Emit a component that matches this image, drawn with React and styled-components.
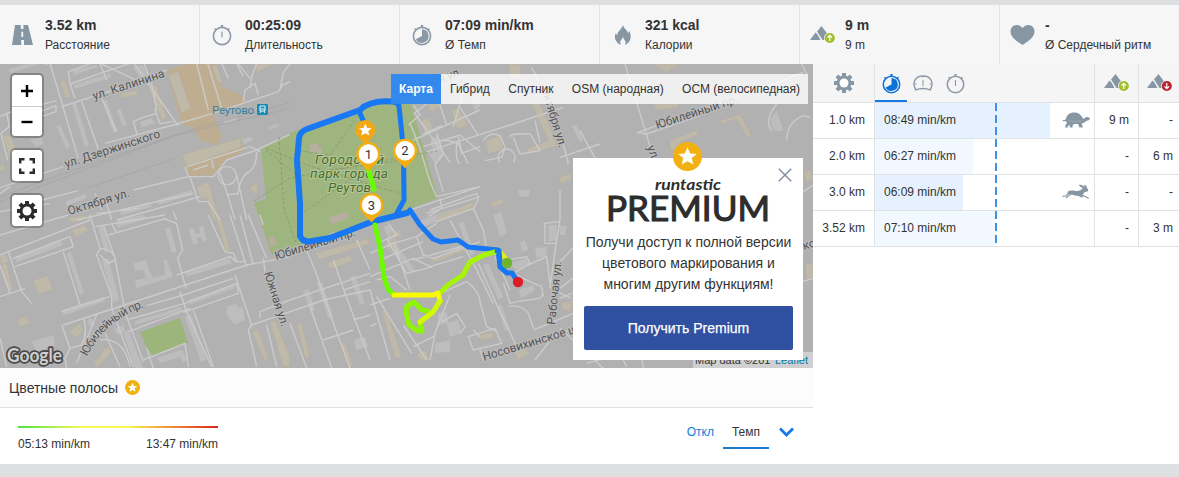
import React, { useState } from "react";
import styled, { createGlobalStyle } from "styled-components";

const GlobalStyle = createGlobalStyle`
  * {
    box-sizing: border-box;
  }
  body {
    margin: 0;
    background: #dedfe1;
    color: #333;
    font-family: "Liberation Sans", Arial, sans-serif;
    font-size: 12px;
    overflow: hidden;
  }
  svg {
    display: block;
  }
`;

const Page = styled.div`
  width: 1179px;
  height: 477px;
  padding: 5px 0 13px;
`;

const StatsBar = styled.div`
  display: grid;
  grid-template-columns: repeat(5, 200px) 179px;
  height: 59px;
  background: #f6f6f6;
`;

const StatCell = styled.div`
  display: flex;
  align-items: center;
  border-right: ${(p) => (p.$last ? "none" : "1px solid #e2e2e4")};
`;

const StatIcon = styled.div`
  width: 45px;
  padding-left: ${(p) => p.$indent || 10}px;
`;

const StatValue = styled.div`
  font-size: 14px;
  font-weight: bold;
  line-height: 20px;
`;

const StatLabel = styled.div`
  padding-top: 1px;
  margin-bottom: -1px;
  line-height: 19px;
`;

const Content = styled.div`
  display: grid;
  grid-template-columns: 813px 366px;
  height: 400px;
  background: #fff;
`;

const MapPanel = styled.div`
  position: relative;
  height: 304px;
  overflow: hidden;
  background: #b1b1b1;
`;

const MapControls = styled.div`
  position: absolute;
  top: 9px;
  left: 10px;
  display: flex;
  flex-direction: column;
  gap: 10px;
`;

const ControlGroup = styled.div`
  width: 34px;
  background: #fff;
  background-clip: padding-box;
  border: 2px solid rgba(0, 0, 0, 0.25);
  border-radius: 5px;
`;

const ControlButton = styled.button`
  display: flex;
  align-items: center;
  justify-content: center;
  width: 30px;
  height: 31px;
  padding: 0;
  border: 0;
  background: none;
  cursor: pointer;
  & + & {
    height: 30px;
    border-top: 1px solid #ccc;
  }
`;

const LayerMenu = styled.div`
  position: absolute;
  top: 10px;
  left: 391px;
  display: flex;
  height: 30px;
  width: 417px;
  background: rgba(255, 255, 255, 0.8);
`;

const LayerItem = styled.button`
  border: 0;
  padding: 0 ${(p) => (p.$active ? 8 : 9.2)}px;
  font: inherit;
  white-space: nowrap;
  cursor: pointer;
  font-weight: ${(p) => (p.$active ? "bold" : "normal")};
  color: ${(p) => (p.$active ? "#fff" : "#333")};
  background: ${(p) => (p.$active ? "rgba(23, 122, 236, 0.87)" : "none")};
`;

const Attribution = styled.div`
  position: absolute;
  right: 0;
  bottom: 0;
  display: flex;
  width: 120px;
  height: 16px;
  padding: 0 5px 0 2px;
  justify-content: space-between;
  font-size: 11px;
  line-height: 16px;
  white-space: nowrap;
  background: rgba(255, 255, 255, 0.4);
  a {
    color: #0078a8;
    text-decoration: none;
  }
`;

const PromoCard = styled.div`
  position: absolute;
  left: 573px;
  top: 94px;
  display: flex;
  flex-direction: column;
  align-items: center;
  width: 230px;
  height: 202px;
  padding: 18px 10px 10px 11px;
  background: #fff;
`;

const PromoBadge = styled.div`
  position: absolute;
  left: 100px;
  top: -16px;
`;

const PromoClose = styled.button`
  position: absolute;
  right: 11px;
  top: 10px;
  padding: 0;
  border: 0;
  background: none;
  cursor: pointer;
`;

const PromoText = styled.p`
  margin: 7px 0 11px;
  width: 216px;
  font-size: 14px;
  line-height: 21px;
  text-align: center;
`;

const PromoButton = styled.button`
  width: 209px;
  height: 44px;
  border: 0;
  border-radius: 2px;
  background: #3050a2;
  color: #fff;
  font: 14px "Liberation Sans", Arial, sans-serif;
  -webkit-text-stroke: 0.25px #fff;
  cursor: pointer;
`;

const LegendHeader = styled.div`
  display: flex;
  align-items: center;
  gap: 7px;
  height: 40px;
  padding-left: 9px;
  border-bottom: 1px solid #e0e0e0;
  background: #fcfcfc;
  font-size: 14px;
`;

const LegendBody = styled.div`
  display: flex;
  justify-content: space-between;
  height: 56px;
  padding: 18px 18px 0;
`;

const Scale = styled.div`
  width: 200px;
`;

const ScaleBar = styled.div`
  height: 2px;
  margin-bottom: 9px;
  background: linear-gradient(90deg, #4be33e, #f8f85a 32%, #fbf652 55%, #ec8a36 78%, #d8241c);
`;

const ScaleLabels = styled.div`
  display: flex;
  justify-content: space-between;
  line-height: 14px;
`;

const ModeTabs = styled.div`
  display: flex;
  align-items: flex-start;
  margin-top: -7px;
`;

const ModeTab = styled.button`
  height: 30px;
  padding: 0 9px 2px;
  border: 0;
  border-bottom: 2px solid ${(p) => (p.$active ? "#1a7bd0" : "transparent")};
  background: none;
  color: ${(p) => (p.$active ? "#333" : "#0b7ce0")};
  font: inherit;
  cursor: pointer;
`;

const ModeArrow = styled.div`
  padding: 7px 1px 0 10px;
`;

const SplitRow = styled.div`
  display: grid;
  grid-template-columns: 62px 220px 44px 40px;
  height: ${(p) => (p.$head ? 39 : 36)}px;
  background: ${(p) => (p.$head ? "#f5f5f6" : "#fff")};
  border-bottom: 1px solid #e1e2e4;
`;

const SplitCell = styled.div`
  display: flex;
  align-items: center;
  justify-content: ${(p) => (p.$center ? "center" : "flex-end")};
  padding-right: ${(p) => (p.$center ? 0 : 9)}px;
  border-right: ${(p) => (p.$last ? "none" : "1px solid #e1e2e4")};
`;

const SplitDistance = styled(SplitCell)`
  padding-right: ${(p) => (p.$last ? 6 : 9)}px;
  padding-bottom: 1px;
`;

const MetricTabs = styled.div`
  display: flex;
  border-right: 1px solid #e1e2e4;
`;

const MetricTab = styled.button`
  display: flex;
  justify-content: center;
  align-items: center;
  width: 32px;
  padding: 2px 0 0;
  border: 0;
  border-bottom: 2px solid ${(p) => (p.$active ? "#1478e6" : "transparent")};
  background: none;
  cursor: pointer;
`;

const PaceCell = styled.div`
  position: relative;
  display: flex;
  align-items: center;
  justify-content: space-between;
  padding: 0 4px 1px 9px;
  border-right: 1px solid #e1e2e4;
`;

const PaceBar = styled.div`
  position: absolute;
  left: 0;
  top: 0;
  bottom: 0;
  background: ${(p) => (p.$strong ? "#e5f1fe" : "#f2f8ff")};
`;

const PaceAverage = styled.div`
  position: absolute;
  left: 120px;
  top: 0;
  bottom: 0;
  width: 2px;
  background: repeating-linear-gradient(#3d92e2 0 8px, transparent 8px 12px);
`;

const PaceValue = styled.span`
  position: relative;
`;

const STAR = "M0-6.4 1.8-2.1 6.4-1.8 2.9 1.1 4 5.6 0 3.2-4 5.6-2.9 1.1-6.4-1.8-1.8-2.1Z";

const StarBadge = ({ size }) => (
  <svg width={size} height={size} viewBox="-10 -10 20 20">
    <circle r="10" fill="#f2b111" />
    <path d={STAR} fill="#fff" />
  </svg>
);

const RoadIcon = () => (
  <svg width="25" height="22" viewBox="0 0 25 22">
    <path d="M5 1h5.8v4h2.6V1h4.600L23 21h-9v-5h-2.800v5H2Z" fill="#8796a3" />
    <path d="M11.200 7.500h2.200v5.500h-2.200z" fill="#f6f6f6" />
    <path d="M9.500 5h1.700v8H9.200zM13.400 5h1v8h-1zM11 6h3v1.500h-3zM9.500 13h5v3h-5z" fill="#8796a3" />
  </svg>
);

const WatchIcon = ({ filled, size = 22, color = "#8c98a6" }) => (
  <svg width={size} height={size} viewBox="0 0 22 22" fill="none" stroke={color}>
    <circle cx="11" cy="12" r="8.600" strokeWidth="1.600" />
    <path d="M9.800 1.800h2.400M11 1.500v2M3.600 4.400l1.200 1.200M18.400 4.400l-1.200 1.200" strokeWidth="1.400" />
    {filled ? (
      <path d="M11 5.200V12L4.800 15.200A6.800 6.800 0 1 0 11 5.200Z" fill={color} stroke="none" />
    ) : (
      <path d="M11 7.500v6" strokeWidth="1.200" />
    )}
  </svg>
);

const SpeedIcon = () => (
  <svg width="22" height="22" viewBox="0 0 22 22" fill="none" stroke="#8c98a6" strokeWidth="1.400">
    <path d="M4 18C0 12 2 4 11 4s11 8 7 14c-3-2-11-2-14 0Z" />
    <path d="M11 8v6" strokeWidth="1" />
    <path d="M11 4v1.500M3 12h1.500M17.500 12H19" strokeWidth="1" />
  </svg>
);

const FlameIcon = () => (
  <svg width="25" height="22" viewBox="0 0 25 22">
    <path
      fill="#8796a3"
      d="M13 1c1 4 4 4.500 5 8 1-.5 1-1.500 1-2.500 3 5 2 11-3 14-1 .4-1 .2-.6-.6 1-3-1.400-4-2.400-6.900-1 3-3.500 3.500-2.400 6.900.2.800 0 1-.8.600C4.500 17.500 4 12 6 9c.2 1.500.6 2 1.300 2.300C7.300 7 11.500 6 13 1Z"
    />
  </svg>
);

const HeartIcon = () => (
  <svg width="25" height="22" viewBox="0 0 25 22">
    <path
      fill="#8796a3"
      d="M12.500 4C10 .5 6.500.5 4 1.500.8 3.200-.5 7 1.300 11c2 4.500 7 7 11.200 10 4.200-3 9.200-5.500 11.200-10 1.800-4 .5-7.800-2.700-9.500C18.500.5 15 .5 12.500 4Z"
    />
  </svg>
);

const ElevationIcon = ({ down }) => (
  <svg width="25" height="18" viewBox="0 0 25 18">
    <path d="M0 14 5.500 6.500l2 2L10.500 14Z" fill="#8796a3" />
    <path d="M7 5.500 11.500 0l6 8v6h-5L8.700 8Z" fill="#8796a3" />
    <circle cx="19.800" cy="12" r="5.800" fill="#f6f6f6" />
    <circle cx="19.800" cy="12" r="5.100" fill={down ? "#bb2532" : "#a2bd30"} />
    <path
      d="M19.800 15V9.500M17.500 11.600l2.300-2.300 2.300 2.300"
      transform={down ? "rotate(180 19.800 12)" : undefined}
      fill="none"
      stroke="#fff"
      strokeWidth="1.200"
    />
  </svg>
);

const GearIcon = ({ color, size, hole = 4.500 }) => (
  <svg width={size} height={size} viewBox="-10 -10 20 20">
    {[0, 45, 90, 135].map((a) => (
      <path key={a} d="M-2-10h4v20h-4z" transform={`rotate(${a})`} fill={color} />
    ))}
    <circle r="7.400" fill={color} />
    <circle r={hole} fill="#fff" />
  </svg>
);

const TurtleIcon = () => (
  <svg width="28" height="16" viewBox="0 0 82 46">
    <path
      fill="#8796a3"
      d="M1 22c4 2 7 2 10-1C14 8 22 1 36 1c14 0 20 8 26 18 4 1 5-6 12-5 6 0 9 4 7 7-3 5-9 3-13 7-3 3-7 5-11 5l4 10-1 2h-9l-4-10H34l-4 8 2 2h-9l-1-8-5 4v4h-8l2-9 4-5-4-5C6 28 2 26 1 22Z"
    />
    <path d="M18 22c12 7 28 7 42 1" fill="none" stroke="#a8b3bd" strokeWidth="2" />
  </svg>
);

const RabbitIcon = () => (
  <svg width="28" height="16" viewBox="0 0 82 46">
    <path
      fill="#8796a3"
      d="M17 22c5-4 12-3 20-3 7 1 12 2 18-2L61 12C54 8 48 5 50 2c7-2 13 2 18 8-3-5-4-7-2-8 5 1 7 6 7 10 4 2 5 6 3 9l-10 3-5 7-10 3c-9 1-18-1-25-5l-9 1Z"
    />
    <path d="M20 24 12 34 2 36M28 28 16 36l-4 5M50 32l16 3 12 7M46 32l14 6" fill="none" stroke="#8796a3" strokeWidth="3.500" />
  </svg>
);

const ExpandIcon = () => (
  <svg width="18" height="18" viewBox="0 0 18 18" fill="none" stroke="#2b2b2b" strokeWidth="2.400">
    <path d="M2.200 6.500V2.200h4.300M11.500 2.200h4.300v4.300M15.800 11.500v4.300h-4.300M6.500 15.800H2.200v-4.300" />
  </svg>
);

// Street geometry is kept in thirds of a pixel, one sheet per map area
const SHEETS = [
  {
    shift: "translate(0 60) scale(.33333)",
    orange: [
      "500,30 560,12 650,12 665,80 735,110 730,130 640,165 665,225 655,255 600,240 575,200 545,195",
      "545,290 720,235 735,270 680,300 640,345 570,348",
    ],
    tan: [
      "505,45 535,35 572,145 545,160",
      "545,285 720,235 725,260 560,318",
      "590,380 625,365 635,395 655,480 640,480 620,415 600,415",
      "180,65 195,60 213,110 197,115",
      "8,225 30,225 45,260 45,300 30,300",
      "0,315 15,312 15,330 0,335",
      "445,80 470,75 500,175 485,180",
      "635,20 650,12 667,65 655,70",
      "765,10 820,12 770,38",
      "755,375 775,372 772,400 758,400",
      "360,100 410,90 415,104 365,114",
    ],
    pale: [
      "220,30 290,14 293,22 220,46", "220,75 330,40 334,52 226,86",
      "215,130 227,127 267,255 255,260", "308,125 320,120 352,215 340,218",
      "170,200 180,195 210,260 200,268", "350,150 362,146 380,195 368,200",
      "398,22 428,14 455,70 440,76", "420,185 455,175 465,190 425,200",
      "90,240 125,232 130,250 110,260", "195,425 255,402 260,414 200,438",
      "670,180 710,170 712,180 672,193", "725,238 755,230 760,240 732,252",
      "805,200 835,190 838,198 810,210", "25,28 120,0 125,10 30,40",
      "360,450 450,425 455,440 365,466", "470,420 575,390 575,405 475,434",
    ],
    roads: [
      "M0 170 20 160 170 122M20 160l8 40-25 20 20 80",
      "M150 10 235 295M145 10l-8 5M185 140 340 90 500 30M210 70 205 35 300 0M225 115 210 72 345 25 420 0M300 12 320 60M245 125 295 268M305 115l45 100M120 155l48-18v18l-60 20",
      "M395 0 535 198M430 5l25 65 15 80M470 160 430 172 400 185l12 40M520 185l-40 6-15-45",
      "M0 383 190 320M315 250 520 195 640 160 835 95 848 75 870 65",
      "M590 10 625 150M620 0 665 145M665 10l20 45M710 12 730 50M715 12 750 55M770 10l-15 40-5 35M870 12l-20 25-10 50M730 125l5-35 30-20 10 35",
      "M125 420 235 392M400 390 565 350 640 350 680 300 770 270 870 223M570 350l25 75 30 0 35 55M555 320l10 30M560 320 750 260q20 8 30 15M640 325l-5-25",
      "M230 480 580 400M290 460 415 445M350 480l250-70M285 400l20 50M320 430l15 50M660 340l25 70 20 70M710 345l30 135M680 405l35-5M770 275q0 50-30 65-20 15-27 65M520 455l10 25M580 330l45-15",
      "M682 320a27 27 0 1 0 .1 0",
      "M0 455 150 430M0 400l30-20M300 10l130 60",
    ],
    dark: ["M0 425 L530 225 L870 145", "M0 412 L130 362 L570 210 L870 128", "M260 385 L525 295"],
  },
  {
    shift: "translate(0 215) scale(.33333)",
    tan: [
      "205,8 255,0 260,12 215,25", "215,45 255,30 265,45 225,68", "100,195 145,182 158,225 115,238",
      "48,315 80,302 90,325 58,336", "0,122 20,118 26,140 5,148", "5,150 20,145 38,225 25,230",
      "205,350 240,325 250,345 230,370", "280,440 300,425 310,402 325,395 335,410 305,445 290,455",
      "645,0 660,0 690,105 678,110", "755,350 775,345 805,430 795,440", "810,325 825,315 870,425 870,455 850,455",
      "810,70 825,65 830,90 817,97",
    ],
    pale: [
      "45,125 180,75 190,90 50,142", "200,115 212,110 252,235 240,240", "185,285 310,245 315,258 188,302",
      "295,35 310,30 330,110 315,115", "305,135 325,130 358,255 340,260", "350,15 430,0 440,12 350,38",
      "400,145 440,135 445,160 460,190 495,178 490,135 500,135 520,185 410,220 405,195 440,190 430,165 405,168",
      "495,40 510,35 530,110 515,115", "565,42 580,38 588,58 600,55 598,35 610,32 620,75 608,80 603,65 590,68 594,85 580,87",
      "555,170 690,130 693,145 560,185", "405,318 545,275 545,288 405,330", "565,255 700,210 705,220 570,268",
      "680,275 710,265 715,278 728,275 735,315 705,330 680,300", "370,350 385,345 430,460 405,460",
      "555,305 575,300 620,435 603,440", "470,430 545,405 560,430 550,445 540,425 485,445",
      "345,340 370,330 375,350 350,360", "95,380 160,360 165,390 110,410", "260,315 275,308 285,328 270,335",
    ],
    roads: [
      "M0 60 205 0M0 120 25 110 270 15M40 130 210 65 220 95 45 155M25 110l40 120 30 35M0 245 75 220M0 150l30 85",
      "M190 110 240 270M185 290 330 245M190 330 740 150M270 0 300 100 290 120 335 245 335 280M285 35 495 0M300 100q45 5 45 35l-20 10-25-25M310 30 345 130 375 290 430 440M335 25l15 30M325 60l175-50",
      "M440 272 550 240 700 190M380 315 555 265 710 205 715 235 550 292M385 350 570 280M540 230 560 290 635 455M490 10l40 15 18 80-15 25 25 90M530 180 690 125 710 140M580 285 640 455",
      "M625 0 675 110 700 115 710 140 735 140M690 0 740 155M720 0 760 150M745 0 800 130M780 0l10 30M740 150 870 125M790 130 795 170M705 180 755 330 745 345 770 455M780 310 780 290 870 255M755 330 870 290M800 330 830 455",
      "M185 330 210 400 195 430 200 460M230 445 290 300M250 310q15 40-5 80l-35 10M315 355l45 100M335 280 400 455M300 375q70-10 90 80M430 435 555 385 565 455M440 400l20 60M0 370 20 455",
    ],
    dark: [],
  },
  {
    shift: "translate(290 240) scale(.33333)",
    tan: ["20,255 35,250 60,350 45,355", "110,70 180,45 190,62 120,88", "150,310 165,305 190,380 175,384"],
    pale: ["80,130 95,125 130,230 115,235", "180,110 195,105 225,190 210,195", "40,150 55,146 75,210 62,214", "190,300 225,290 235,320 200,330"],
    roads: [
      "M0 180 120 140 240 100M0 215 60 195 100 180 240 150M45 20 75 90 130 250 180 384M130 60 165 160 240 360M60 200 125 384M0 250 50 384M160 150 240 125M190 240 240 225M100 300 190 270M200 0 240 90",
    ],
    dark: [],
  },
  {
    shift: "translate(240 80) scale(.33333)",
    tan: [
      "540,125 565,112 580,145 555,160", "225,520 385,475 390,492 235,540", "30,320 50,310 55,330 38,340",
      "435,490 460,480 470,500 445,515", "550,10 570,0 600,80 570,95 562,70 585,65 570,20 550,25",
    ],
    pale: [
      "530,425 690,370 695,385 540,445", "570,180 595,165 605,200 580,210", "430,440 450,435 480,510 465,520", "690,50 720,40 720,80 705,95",
    ],
    roads: [
      "M505 135 540 105 520 75M520 180 720 90M510 130l30 75 30 100 20 45 130-30M550 200 660 165 720 215M590 160l20 60-25 35 25 80M600 355l5 30-40 25M560 400 720 350",
      "M480 400 720 320M410 490l60-25-25-35M420 540l130-55M575 0 620 135M640 140 680 0M655 170l10 50 55-20",
    ],
    dark: [],
  },
  {
    shift: "translate(370 190) scale(.33333)",
    tan: [
      "200,80 310,35 310,50 210,95", "185,205 285,170 285,183 190,218", "360,38 400,25 402,38 365,50",
      "60,130 90,120 95,135 70,148", "35,360 50,360 95,500 75,505", "330,435 370,425 370,445 330,450",
      "140,490 165,480 180,510 150,510", "430,480 450,465 480,490 445,510", "575,345 610,330 610,350 580,360",
    ],
    pale: [
      "370,75 395,65 410,130 390,140", "265,100 280,95 315,190 300,195", "80,190 95,185 135,240 120,248",
      "340,225 355,220 400,320 385,330", "380,345 395,345 420,420 405,420", "415,220 470,205 475,220 440,240",
      "495,175 530,170 530,200 500,205", "445,300 490,285 495,300 455,325", "230,400 265,390 275,430 240,440",
      "195,460 240,450 240,485 195,490", "450,155 465,150 475,180 455,185", "445,0 480,0 475,20 450,20",
      "535,105 560,105 560,150 535,155", "205,370 230,365 235,400 200,405",
    ],
    roads: [
      "M180 60 320 10 325 30 310 55 200 95M0 190 70 160 140 140 200 100M140 140l20 55 30 10 140-50M130 210 290 165M0 260 130 205 180 230 280 200M70 155 120 300M50 145 110 250 190 230",
      "M240 90 315 230 370 340M310 55 340 120 350 180M325 220 390 365 440 470M375 200 420 300M400 280 420 340 440 335 510 325 520 310M385 215 470 200 480 220 430 250 480 275 515 290 520 320",
      "M570 0 570 90 560 150 540 290 550 300 605 325M520 100 570 95M525 100 525 160 560 160M475 225 530 200 540 280M415 350q35-10 60 20l15 45",
      "M290 275q40 30 40 60l20 75 30 15M200 315 290 275M215 395 260 370 285 410 270 430M295 440 375 415 395 460 310 480ZM330 480l10 30M310 420l20 20",
      "M0 300 60 510M20 320 125 490M0 345 60 325M100 405 170 510M180 510 195 430 240 315M190 440 130 470M490 420 610 370M495 510 550 440 600 420M440 470 500 460M0 410 20 400M20 270 60 260 110 300",
    ],
    dark: [],
  },
  {
    shift: "translate(380 64) scale(.33333)",
    tan: [
      "385,0 420,0 425,40 400,45 390,35", "455,120 475,110 510,185 530,245 515,250 445,270 438,255 505,230",
      "315,230 360,215 370,255 325,270", "215,140 235,130 265,185 230,195", "870,230 945,200 960,210 900,235 885,260 870,255",
      "1020,170 1080,150 1115,215 1100,220 1070,165 1025,180", "820,120 895,110 895,130 830,140", "820,0 900,0 860,25",
    ],
    pale: ["575,185 590,180 610,230 600,235", "140,260 175,250 190,280 165,300", "1170,165 1190,140 1210,200 1180,200"],
    roads: [
      "M100 150 140 120M105 150 210 295M130 210 185 185M140 265 195 245 400 180 550 130M240 130l55 85M180 230q25-5 55 10l30 60M230 240q-5 50 10 60M310 230q20-30 50-15l15 35-10 30-50 10M390 220q0-10 20-10h40l30 50-60 10-20-50M540 280 660 240M465 170l15 65",
      "M735 0 820 280M775 205 870 170 1180 60 1270 25M770 205l30 5 160-55M600 200 655 300M550 240l15 60M1190 120q-40 50-15 80M1220 230q0-55 50-75l20 5M1265 0l15 30M455 10l20 40",
      "M360 295a25 25 0 1 1 40 0",
    ],
    dark: [],
  },
  {
    shift: "translate(560 135) scale(.33333)",
    tan: ["0,125 35,115 35,135 0,145", "5,500 35,505 30,530 5,525", "735,390 760,380 760,425 740,435", "730,110 750,105 760,130 740,140"],
    pale: ["0,270 20,275 15,300 0,300"],
    roads: ["M0 380 38 340M0 460 38 430M0 490 35 475M0 580 130 700M80 685 240 640 250 700M200 695l-10-20M730 170l30-20M725 440l35-10"],
    dark: [],
  },
];

const MapCanvas = styled.svg`
  font-family: Roboto, "Liberation Sans", sans-serif;
  font-size: 12px;
`;

const StreetName = styled.text`
  fill: #555;
  stroke: #bdbdbd;
  stroke-width: 2px;
  paint-order: stroke;
`;

const ParkName = styled(StreetName)`
  fill: #4d6b2e;
  stroke: #b3c99a;
  font-size: 13.5px;
  font-style: italic;
`;

const STREETS = [
  ["ул. Калинина", 94, 100, -18, 75],
  ["ул. Дзержинского", 66, 168, -18, 100],
  ["Октября ул.", 69, 215, -17, 64],
  ["Октября ул.", 402, 97, -20, 65],
  ["Октября ул.", 541, 88, 73, 63],
  ["Юбилейный пр.", 657, 129, -18, 86],
  ["Юбилейный пр.", 276, 260, -17, 84],
  ["Южная ул.", 264, 273, 72, 57],
  ["Рабочая ул.", 555, 325, -84, 64],
  ["Носовихинское шоссе", 484, 361, -17, 124],
  ["ул.", 647, 147, 70, 16],
  ["ко", 804, 250, -17, 13],
];

const PINS = [
  { x: 368.3, y: 154, label: "1" },
  { x: 405, y: 150.700, label: "2" },
  { x: 371.500, y: 205, label: "3" },
];

const RunMap = () => (
  <MapCanvas width="813" height="304" viewBox="0 64 813 304">
    <rect y="64" width="813" height="304" fill="#b1b1b1" />
    {SHEETS.map((s) => (
      <g key={s.shift} transform={s.shift}>
        {(s.orange || []).map((d) => <polygon key={d} points={d} fill="#bfad91" />)}
        {s.pale.map((d) => <polygon key={d} points={d} fill="#bdbdbd" />)}
        {s.tan.map((d) => <polygon key={d} points={d} fill="#bfb9aa" stroke="#b5ad9c" strokeWidth="1.500" />)}
        {s.dark.map((d) => <path key={d} d={d} fill="none" stroke="#a0a0a0" strokeWidth="1.800" />)}
      </g>
    ))}
    <path
      d="M261 148 290 133 360 108 384 99 411 103 438 198 407 210 272 255 254 203 266 199Z"
      fill="#9fb57f"
    />
    <path d="M140 332 180 318 188 343 153 356 147 348Z" fill="#9bb57b" />
    {SHEETS.map((s) => (
      <g key={s.shift} transform={s.shift} fill="none" stroke="#cbcbcb" strokeWidth="4.200" strokeLinejoin="round">
        {s.roads.map((d) => <path key={d} d={d} />)}
      </g>
    ))}
    <g fill="none" stroke="#859668" strokeWidth=".8" strokeDasharray="3 2">
      <path d="M266 148 310 166 405 195M254 201 290 178 437 151M279 137 284 210 296 242M266 150 300 178M295 150 330 155 361 111M330 170 405 160M300 215 356 175" />
    </g>
    <path d="M310 144h8v3h4v7h-5v-2h-7zM329 217l18-5 2 6-18 6zM268 238l6-2 3 8-6 2z" fill="#b7aea0" />
    {STREETS.map(([name, x, y, angle, len]) => (
      <StreetName key={`${name}${x}`} transform={`translate(${x} ${y}) rotate(${angle})`} textLength={len}>
        {name}
      </StreetName>
    ))}
    <path id="jubilee" d="M87 357Q105 318 151 305" fill="none" />
    <StreetName>
      <textPath href="#jubilee" textLength="78">Юбилейный пр.</textPath>
    </StreetName>
    <text x="212" y="114" fontSize="11.500" fill="#3982a2" textLength="42">Реутово</text>
    <rect x="257" y="104" width="11" height="11" rx="1" fill="#168db5" />
    <path d="M260 106h5v5h-5zM260 113l1-2M265 113l-1-2M260 109h5" fill="none" stroke="#e8f2f5" />
    <ParkName x="315" y="164" textLength="69">Городской</ParkName>
    <ParkName x="310" y="178" textLength="78">парк города</ParkName>
    <ParkName x="328" y="192" textLength="43">Реутов</ParkName>

    <g fill="none" stroke="#1877f2" strokeWidth="5" strokeLinejoin="round" strokeLinecap="round">
      <path d="M359 111 366 127" />
      <path d="M397 102Q371 99 360 110L307 129Q299 132 299 139L297 160 300 204V236Q303 243 312 241L330 238 371 222 407 213" strokeWidth="6" />
      <path d="M396 102 399 106 403.500 150 404 200 397 213" />
      <path d="M399 214 407 213 410 210 420 225 433 239 441 242 458 240 468 247 498 250 500 267 507 273 512 273 516 279" />
    </g>
    <g fill="none" strokeWidth="5" strokeLinejoin="round" strokeLinecap="round">
      <path d="M368 168 374 189" stroke="#66ff00" />
      <path d="M375 225 380 247 384 277 388 289 394 295" stroke="#6cfb00" />
      <path d="M441 292 448 285 463 275 470 262 485 254.500 495 252" stroke="#a6f504" />
      <path d="M501 253 505 258" stroke="#e5ed19" />
      <path d="M428 311 422 310 414 302 407 306 406 312 409 325 418 331 422 331 420 323" stroke="#8df600" />
      <path d="M394 295H433L438 293 440 301" stroke="#f8fb00" />
      <path d="M440 301 433 312 420 322" stroke="#d4f900" />
    </g>
    <path d="M495 250 499 251 500 262" fill="none" stroke="#1877f2" strokeWidth="5" />
    <circle cx="507" cy="263" r="5.200" fill="#6db52d" />
    <circle cx="518" cy="282" r="5.200" fill="#dc1f26" />
    <g transform="translate(365.300 130)">
      <path d="M0 15-8 6A10 10 0 1 1 8 6Z" fill="#f2a814" />
      <path d={STAR} fill="#fff" />
    </g>
    {PINS.map((pin) => (
      <g key={pin.label} transform={`translate(${pin.x} ${pin.y})`}>
        <path d="M0 17.500-9 8A12 12 0 1 1 9 8Z" fill="#f6ad10" />
        <circle r="9.700" fill="#fff" />
        <text y="4.500" textAnchor="middle" fontSize="13" fill="#333">{pin.label}</text>
      </g>
    ))}
    <text
      x="7" y="362" textLength="55" lengthAdjust="spacingAndGlyphs"
      fontFamily="Lato" fontSize="18.500" fontWeight="bold"
      fill="#cfcfcf" stroke="#484848" strokeWidth="3.500" strokeLinejoin="round" paintOrder="stroke"
    >
      Google
    </text>
  </MapCanvas>
);

const LAYERS = ["Карта", "Гибрид", "Спутник", "OSM (народная)", "ОСМ (велосипедная)"];

const STATS = [
  { value: "3.52 km", label: "Расстояние", icon: <RoadIcon /> },
  { value: "00:25:09", label: "Длительность", icon: <WatchIcon />, indent: 11 },
  { value: "07:09 min/km", label: "Ø Темп", icon: <WatchIcon filled />, indent: 11 },
  { value: "321 kcal", label: "Калории", icon: <FlameIcon /> },
  { value: "9 m", label: "9 m", icon: <ElevationIcon /> },
  { value: "-", label: "Ø Сердечный ритм", icon: <HeartIcon /> },
];

const SPLITS = [
  { distance: "1.0 km", pace: "08:49 min/km", width: 175, up: "9 m", down: "-", icon: <TurtleIcon />, strong: true },
  { distance: "2.0 km", pace: "06:27 min/km", width: 98, up: "-", down: "6 m" },
  { distance: "3.0 km", pace: "06:09 min/km", width: 88, up: "-", down: "-", icon: <RabbitIcon />, strong: true },
  { distance: "3.52 km", pace: "07:10 min/km", width: 121, up: "-", down: "3 m" },
];

const PromoLogo = styled.svg`
  overflow: visible;
  font-family: Lato, "Open Sans", sans-serif;
`;

const Promo = ({ onClose }) => (
  <PromoCard>
    <PromoBadge><StarBadge size={29} /></PromoBadge>
    <PromoClose aria-label="close" onClick={onClose}>
      <svg width="14" height="14" viewBox="0 0 14 14" stroke="#8290a0" strokeWidth="1.500">
        <path d="M.8.8 13.200 13.200M13.200.8.800 13.200" />
      </svg>
    </PromoClose>
    <PromoLogo width="164" height="49" viewBox="0 0 164 49" fill="#2d2d2d">
      <text x="48" y="14" fontSize="16" fontWeight="bold" fontStyle="italic" textLength="66" lengthAdjust="spacingAndGlyphs">
        runtastic
      </text>
      <text x="-1" y="45" fontSize="34.500" stroke="#2d2d2d" strokeWidth="1.100" textLength="164" lengthAdjust="spacingAndGlyphs">
        PREMIUM
      </text>
    </PromoLogo>
    <PromoText>Получи доступ к полной версии цветового маркирования и многим другим функциям!</PromoText>
    <PromoButton>Получить Premium</PromoButton>
  </PromoCard>
);

const App = () => {
  const [layer, setLayer] = useState("Карта");
  const [mode, setMode] = useState("Темп");
  const [promoOpen, setPromoOpen] = useState(true);

  return (
    <Page>
      <GlobalStyle />
      <StatsBar>
        {STATS.map((stat, i) => (
          <StatCell key={i} $last={i === STATS.length - 1}>
            <StatIcon $indent={stat.indent}>{stat.icon}</StatIcon>
            <div>
              <StatValue>{stat.value}</StatValue>
              <StatLabel>{stat.label}</StatLabel>
            </div>
          </StatCell>
        ))}
      </StatsBar>
      <Content>
        <div>
          <MapPanel>
            <RunMap />
            <MapControls>
              <ControlGroup>
                <ControlButton aria-label="+">
                  <svg width="14" height="14" stroke="#000" strokeWidth="2.400"><path d="M7 1v12M1 7h12" /></svg>
                </ControlButton>
                <ControlButton aria-label="-">
                  <svg width="14" height="14" stroke="#000" strokeWidth="2.400"><path d="M1.500 7h11" /></svg>
                </ControlButton>
              </ControlGroup>
              <ControlGroup>
                <ControlButton><ExpandIcon /></ControlButton>
              </ControlGroup>
              <ControlGroup>
                <ControlButton><GearIcon size={20} color="#2b2b2b" /></ControlButton>
              </ControlGroup>
            </MapControls>
            <LayerMenu>
              {LAYERS.map((name) => (
                <LayerItem key={name} $active={layer === name} onClick={() => setLayer(name)}>
                  {name}
                </LayerItem>
              ))}
            </LayerMenu>
            <Attribution>
              <span>Map data ©201</span>
              <a href="#leaflet">Leaflet</a>
            </Attribution>
            {promoOpen && <Promo onClose={() => setPromoOpen(false)} />}
          </MapPanel>
          <LegendHeader>
            Цветные полосы
            <StarBadge size={15} />
          </LegendHeader>
          <LegendBody>
            <Scale>
              <ScaleBar />
              <ScaleLabels>
                <span>05:13 min/km</span>
                <span>13:47 min/km</span>
              </ScaleLabels>
            </Scale>
            <ModeTabs>
              {["Откл", "Темп"].map((name) => (
                <ModeTab key={name} $active={mode === name} onClick={() => setMode(name)}>
                  {name}
                </ModeTab>
              ))}
              <ModeArrow>
                <svg width="15" height="12" viewBox="0 0 15 12" fill="none" stroke="#1478e6" strokeWidth="2.800">
                  <path d="m1 2.500 6.500 6.500L14 2.500" />
                </svg>
              </ModeArrow>
            </ModeTabs>
          </LegendBody>
        </div>
        <div>
          <SplitRow $head>
            <SplitCell $center><GearIcon size={20} color="#8796a3" /></SplitCell>
            <MetricTabs>
              <MetricTab $active><WatchIcon filled size={21} color="#0b72d9" /></MetricTab>
              <MetricTab><SpeedIcon /></MetricTab>
              <MetricTab><WatchIcon size={21} /></MetricTab>
            </MetricTabs>
            <SplitCell $center><ElevationIcon /></SplitCell>
            <SplitCell $center $last><ElevationIcon down /></SplitCell>
          </SplitRow>
          {SPLITS.map((split) => (
            <SplitRow key={split.distance}>
              <SplitDistance>{split.distance}</SplitDistance>
              <PaceCell>
                <PaceBar $strong={split.strong} style={{ width: split.width }} />
                <PaceAverage />
                <PaceValue>{split.pace}</PaceValue>
                {split.icon}
              </PaceCell>
              <SplitDistance>{split.up}</SplitDistance>
              <SplitDistance $last>{split.down}</SplitDistance>
            </SplitRow>
          ))}
        </div>
      </Content>
    </Page>
  );
};

export default App;
